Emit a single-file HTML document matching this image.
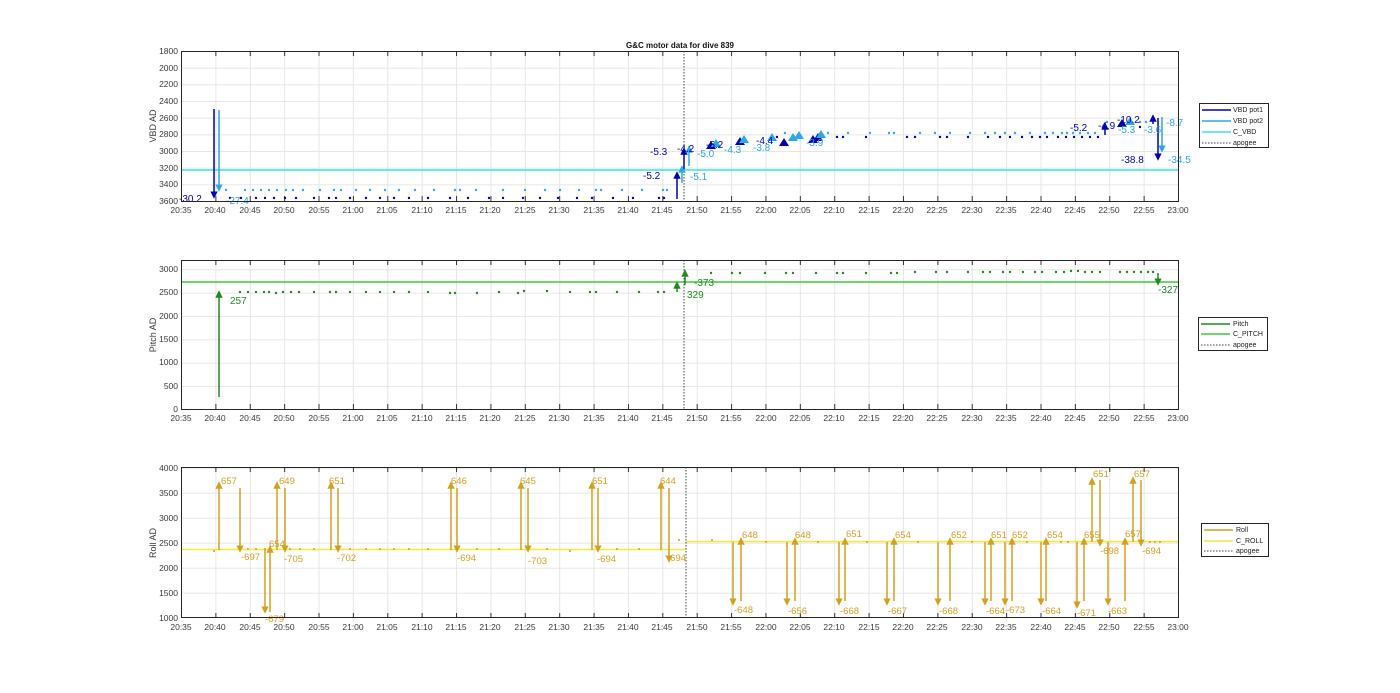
<!DOCTYPE html>
<html><head><meta charset="utf-8"><style>
html,body{margin:0;padding:0;background:#fff;}
svg{display:block;font-family:"Liberation Sans",Arial,sans-serif;}
.t{font-size:8.5px;fill:#3a3a3a;}
</style></head><body>
<svg width="1400" height="693" viewBox="0 0 1400 693" xmlns="http://www.w3.org/2000/svg">
<defs>
<pattern id="vg" x="181" y="0" width="34.38" height="700" patternUnits="userSpaceOnUse"><line x1="0.5" y1="0" x2="0.5" y2="700" stroke="#e6e6e6" stroke-width="1"/></pattern>
<pattern id="hg1" x="0" y="51" width="1400" height="16.67" patternUnits="userSpaceOnUse"><line x1="0" y1="0.5" x2="1400" y2="0.5" stroke="#e6e6e6"/></pattern>
<pattern id="hg2" x="0" y="269.3" width="1400" height="23.33" patternUnits="userSpaceOnUse"><line x1="0" y1="0.5" x2="1400" y2="0.5" stroke="#e6e6e6"/></pattern>
<pattern id="hg3" x="0" y="467.7" width="1400" height="25" patternUnits="userSpaceOnUse"><line x1="0" y1="0.5" x2="1400" y2="0.5" stroke="#e6e6e6"/></pattern>
<pattern id="tk" x="181" y="0" width="34.38" height="10" patternUnits="userSpaceOnUse"><line x1="0.5" y1="0" x2="0.5" y2="10" stroke="#333"/></pattern>
<marker id="mb" markerWidth="5" markerHeight="5" refX="2.5" refY="2.5" orient="auto" markerUnits="strokeWidth"><path d="M0,0L5,2.5L0,5Z" fill="#0000b0"/></marker>
<marker id="ml" markerWidth="5" markerHeight="5" refX="2.5" refY="2.5" orient="auto" markerUnits="strokeWidth"><path d="M0,0L5,2.5L0,5Z" fill="#2aa8e8"/></marker>
<marker id="mg" markerWidth="5" markerHeight="5" refX="2.5" refY="2.5" orient="auto" markerUnits="strokeWidth"><path d="M0,0L5,2.5L0,5Z" fill="#1f8a1f"/></marker>
<marker id="my" markerWidth="5" markerHeight="5" refX="2.5" refY="2.5" orient="auto" markerUnits="strokeWidth"><path d="M0,0L5,2.5L0,5Z" fill="#d4a020"/></marker>
</defs>

<!-- ============ TOP AXES ============ -->
<rect x="181" y="51" width="998" height="150" fill="url(#vg)"/>
<rect x="181" y="51" width="998" height="150" fill="url(#hg1)"/>
<rect x="181" y="51" width="998" height="5" fill="url(#tk)"/>
<rect x="181" y="196" width="998" height="5" fill="url(#tk)"/>
<text x="680" y="48" text-anchor="middle" style="font-size:8px;font-weight:bold;fill:#111">G&amp;C motor data for dive 839</text>
<g class="t" text-anchor="end">
<text x="178" y="54">1800</text><text x="178" y="71">2000</text><text x="178" y="87">2200</text><text x="178" y="104">2400</text><text x="178" y="121">2600</text><text x="178" y="137">2800</text><text x="178" y="154">3000</text><text x="178" y="171">3200</text><text x="178" y="187">3400</text><text x="178" y="204">3600</text>
</g>
<text transform="translate(156,126) rotate(-90)" text-anchor="middle" class="t" style="font-size:9px">VBD AD</text>
<line x1="181" y1="170" x2="1179" y2="170" stroke="#3ee0e0" stroke-width="1.5"/>
<line x1="684" y1="51" x2="684" y2="201" stroke="#444" stroke-dasharray="1.5,1.5"/>
<g fill="#2aa8e8">
<circle cx="226" cy="190" r="1.2"/><circle cx="245" cy="190" r="1.2"/><circle cx="253" cy="190" r="1.2"/><circle cx="261" cy="190" r="1.2"/><circle cx="269" cy="190" r="1.2"/><circle cx="277" cy="190" r="1.2"/><circle cx="286" cy="190" r="1.2"/><circle cx="293" cy="190" r="1.2"/><circle cx="303" cy="190" r="1.2"/><circle cx="320" cy="190" r="1.2"/><circle cx="334" cy="190" r="1.2"/><circle cx="341" cy="190" r="1.2"/><circle cx="356" cy="190" r="1.2"/><circle cx="370" cy="190" r="1.2"/><circle cx="385" cy="190" r="1.2"/><circle cx="399" cy="190" r="1.2"/><circle cx="415" cy="190" r="1.2"/><circle cx="434" cy="190" r="1.2"/><circle cx="455" cy="190" r="1.2"/><circle cx="460" cy="190" r="1.2"/><circle cx="476" cy="190" r="1.2"/><circle cx="503" cy="190" r="1.2"/><circle cx="525" cy="190" r="1.2"/><circle cx="545" cy="190" r="1.2"/><circle cx="560" cy="190" r="1.2"/><circle cx="579" cy="190" r="1.2"/><circle cx="596" cy="190" r="1.2"/><circle cx="601" cy="190" r="1.2"/><circle cx="622" cy="190" r="1.2"/><circle cx="642" cy="190" r="1.2"/><circle cx="663" cy="190" r="1.2"/><circle cx="667" cy="190" r="1.2"/>
</g>
<g fill="#0000b0">
<circle cx="230" cy="198" r="1.2"/><circle cx="241" cy="198" r="1.2"/><circle cx="256" cy="198" r="1.2"/><circle cx="265" cy="198" r="1.2"/><circle cx="274" cy="198" r="1.2"/><circle cx="285" cy="198" r="1.2"/><circle cx="296" cy="198" r="1.2"/><circle cx="314" cy="198" r="1.2"/><circle cx="329" cy="198" r="1.2"/><circle cx="336" cy="198" r="1.2"/><circle cx="350" cy="198" r="1.2"/><circle cx="366" cy="198" r="1.2"/><circle cx="380" cy="198" r="1.2"/><circle cx="394" cy="198" r="1.2"/><circle cx="409" cy="198" r="1.2"/><circle cx="428" cy="198" r="1.2"/><circle cx="450" cy="198" r="1.2"/><circle cx="468" cy="198" r="1.2"/><circle cx="489" cy="198" r="1.2"/><circle cx="503" cy="198" r="1.2"/><circle cx="523" cy="198" r="1.2"/><circle cx="540" cy="198" r="1.2"/><circle cx="558" cy="198" r="1.2"/><circle cx="577" cy="198" r="1.2"/><circle cx="592" cy="198" r="1.2"/><circle cx="613" cy="198" r="1.2"/><circle cx="633" cy="198" r="1.2"/><circle cx="659" cy="198" r="1.2"/><circle cx="664" cy="198" r="1.2"/>
</g>
<g fill="#2aa8e8">
<circle cx="785" cy="133" r="1.2"/><circle cx="821" cy="133" r="1.2"/><circle cx="828" cy="133" r="1.2"/><circle cx="848" cy="133" r="1.2"/><circle cx="870" cy="133" r="1.2"/><circle cx="889" cy="133" r="1.2"/><circle cx="894" cy="133" r="1.2"/><circle cx="920" cy="133" r="1.2"/><circle cx="935" cy="133" r="1.2"/><circle cx="950" cy="133" r="1.2"/><circle cx="970" cy="133" r="1.2"/><circle cx="985" cy="133" r="1.2"/><circle cx="995" cy="133" r="1.2"/><circle cx="1005" cy="133" r="1.2"/><circle cx="1015" cy="133" r="1.2"/><circle cx="1030" cy="133" r="1.2"/><circle cx="1045" cy="133" r="1.2"/><circle cx="1053" cy="133" r="1.2"/><circle cx="1062" cy="133" r="1.2"/><circle cx="1067" cy="133" r="1.2"/><circle cx="1073" cy="133" r="1.2"/><circle cx="1080" cy="133" r="1.2"/><circle cx="1088" cy="133" r="1.2"/><circle cx="1095" cy="133" r="1.2"/><circle cx="1107" cy="122" r="1.2"/><circle cx="1140" cy="122" r="1.2"/><circle cx="1146" cy="122" r="1.2"/>
</g>
<g fill="#0000b0">
<circle cx="777" cy="137" r="1.2"/><circle cx="837" cy="137" r="1.2"/><circle cx="843" cy="137" r="1.2"/><circle cx="866" cy="137" r="1.2"/><circle cx="907" cy="137" r="1.2"/><circle cx="915" cy="137" r="1.2"/><circle cx="940" cy="137" r="1.2"/><circle cx="947" cy="137" r="1.2"/><circle cx="968" cy="137" r="1.2"/><circle cx="988" cy="137" r="1.2"/><circle cx="1000" cy="137" r="1.2"/><circle cx="1010" cy="137" r="1.2"/><circle cx="1022" cy="137" r="1.2"/><circle cx="1032" cy="137" r="1.2"/><circle cx="1040" cy="137" r="1.2"/><circle cx="1047" cy="137" r="1.2"/><circle cx="1058" cy="137" r="1.2"/><circle cx="1066" cy="137" r="1.2"/><circle cx="1074" cy="137" r="1.2"/><circle cx="1082" cy="137" r="1.2"/><circle cx="1090" cy="137" r="1.2"/><circle cx="1098" cy="137" r="1.2"/><circle cx="1122" cy="125" r="1.2"/><circle cx="1140" cy="127" r="1.2"/>
</g>
<g stroke-width="1.5" fill="none">
<line x1="214" y1="109" x2="214" y2="195" stroke="#0000b0" marker-end="url(#mb)"/>
<line x1="219" y1="110" x2="219" y2="188" stroke="#2aa8e8" marker-end="url(#ml)"/>
<line x1="677" y1="199" x2="677" y2="175" stroke="#0000b0" marker-end="url(#mb)"/>
<line x1="684" y1="169" x2="684" y2="151" stroke="#0000b0" marker-end="url(#mb)"/>
<line x1="682" y1="183" x2="682" y2="169" stroke="#2aa8e8" marker-end="url(#ml)"/>
<line x1="689" y1="166" x2="689" y2="149" stroke="#2aa8e8" marker-end="url(#ml)"/>
<line x1="1105" y1="135" x2="1105" y2="126" stroke="#0000b0" marker-end="url(#mb)"/>
<line x1="1153" y1="124" x2="1153" y2="118" stroke="#0000b0" marker-end="url(#mb)"/>
<line x1="1158" y1="118" x2="1158" y2="157" stroke="#0000b0" marker-end="url(#mb)"/>
<line x1="1162" y1="117" x2="1162" y2="149" stroke="#2aa8e8" marker-end="url(#ml)"/>
</g>
<g fill="#0000b0">
<path d="M706,149l5,-8l5,8z"/><path d="M735,145l5,-8l5,8z"/><path d="M779,146l5,-8l5,8z"/><path d="M808,143l5,-8l5,8z"/><path d="M813,141l5,-8l5,8z"/><path d="M1117,127l5,-8l5,8z"/>
</g>
<g fill="#2aa8e8">
<path d="M711,147l5,-8l5,8z"/><path d="M739,143l5,-8l5,8z"/><path d="M767,141l5,-8l5,8z"/><path d="M788,141l5,-8l5,8z"/><path d="M794,139l5,-8l5,8z"/><path d="M816,138l5,-8l5,8z"/><path d="M1125,125l5,-8l5,8z"/>
</g>
<g style="font-size:10px" fill="#0000b0">
<text x="179" y="202">-30.2</text><text x="650" y="155">-5.3</text><text x="643" y="179">-5.2</text><text x="677" y="152">-4.2</text><text x="706" y="148">-5.2</text><text x="756" y="144">-4.4</text><text x="1070" y="131">-5.2</text><text x="1098" y="129">-4.9</text><text x="1117" y="123">-10.2</text><text x="1121" y="163">-38.8</text>
</g>
<g style="font-size:10px" fill="#2aa8e8">
<text x="226" y="204">-27.4</text><text x="690" y="180">-5.1</text><text x="697" y="157">-5.0</text><text x="724" y="153">-4.3</text><text x="753" y="151">-3.8</text><text x="806" y="146">-3.9</text><text x="1118" y="133">-5.3</text><text x="1144" y="133">-3.6</text><text x="1166" y="126">-8.7</text><text x="1168" y="163">-34.5</text>
</g>
<rect x="181.5" y="51.5" width="997" height="150" fill="none" stroke="#262626" stroke-width="1"/>
<g class="t" text-anchor="middle">
<text x="181" y="213">20:35</text><text x="215" y="213">20:40</text><text x="250" y="213">20:45</text><text x="284" y="213">20:50</text><text x="319" y="213">20:55</text><text x="353" y="213">21:00</text><text x="387" y="213">21:05</text><text x="422" y="213">21:10</text><text x="456" y="213">21:15</text><text x="490" y="213">21:20</text><text x="525" y="213">21:25</text><text x="559" y="213">21:30</text><text x="594" y="213">21:35</text><text x="628" y="213">21:40</text><text x="662" y="213">21:45</text><text x="697" y="213">21:50</text><text x="731" y="213">21:55</text><text x="766" y="213">22:00</text><text x="800" y="213">22:05</text><text x="834" y="213">22:10</text><text x="869" y="213">22:15</text><text x="903" y="213">22:20</text><text x="937" y="213">22:25</text><text x="972" y="213">22:30</text><text x="1006" y="213">22:35</text><text x="1041" y="213">22:40</text><text x="1075" y="213">22:45</text><text x="1109" y="213">22:50</text><text x="1144" y="213">22:55</text><text x="1178" y="213">23:00</text>
</g>
<rect x="1199.5" y="103.5" width="69" height="44" fill="#fff" stroke="#262626"/>
<line x1="1202" y1="110" x2="1231" y2="110" stroke="#0000b0" stroke-width="1.5"/>
<line x1="1202" y1="121" x2="1231" y2="121" stroke="#2aa8e8" stroke-width="1.5"/>
<line x1="1202" y1="132" x2="1231" y2="132" stroke="#3ee0e0" stroke-width="1.5"/>
<line x1="1202" y1="143" x2="1231" y2="143" stroke="#444" stroke-dasharray="1.5,1.5"/>
<g style="font-size:7px" fill="#222"><text x="1233" y="112">VBD pot1</text><text x="1233" y="123">VBD pot2</text><text x="1233" y="134">C_VBD</text><text x="1233" y="145">apogee</text></g>

<!-- ============ MIDDLE AXES ============ -->
<rect x="181" y="260" width="998" height="149" fill="url(#vg)"/>
<rect x="181" y="260" width="998" height="149" fill="url(#hg2)"/>
<rect x="181" y="260" width="998" height="5" fill="url(#tk)"/>
<rect x="181" y="404" width="998" height="5" fill="url(#tk)"/>
<g class="t" text-anchor="end">
<text x="178" y="272">3000</text><text x="178" y="295">2500</text><text x="178" y="319">2000</text><text x="178" y="342">1500</text><text x="178" y="365">1000</text><text x="178" y="389">500</text><text x="178" y="412">0</text>
</g>
<text transform="translate(156,335) rotate(-90)" text-anchor="middle" class="t" style="font-size:9px">Pitch AD</text>
<line x1="181" y1="282" x2="1179" y2="282" stroke="#3ccc3c" stroke-width="1.5"/>
<line x1="684" y1="260" x2="684" y2="409" stroke="#444" stroke-dasharray="1.5,1.5"/>
<g fill="#1f8a1f">
<circle cx="240" cy="292" r="1.2"/><circle cx="248" cy="292" r="1.2"/><circle cx="256" cy="292" r="1.2"/><circle cx="264" cy="292" r="1.2"/><circle cx="269" cy="292" r="1.2"/><circle cx="276" cy="293" r="1.2"/><circle cx="283" cy="292" r="1.2"/><circle cx="291" cy="292" r="1.2"/><circle cx="299" cy="292" r="1.2"/><circle cx="314" cy="292" r="1.2"/><circle cx="330" cy="292" r="1.2"/><circle cx="336" cy="292" r="1.2"/><circle cx="350" cy="292" r="1.2"/><circle cx="366" cy="292" r="1.2"/><circle cx="380" cy="292" r="1.2"/><circle cx="394" cy="292" r="1.2"/><circle cx="409" cy="292" r="1.2"/><circle cx="428" cy="292" r="1.2"/><circle cx="450" cy="293" r="1.2"/><circle cx="455" cy="293" r="1.2"/><circle cx="477" cy="293" r="1.2"/><circle cx="499" cy="292" r="1.2"/><circle cx="518" cy="293" r="1.2"/><circle cx="524" cy="291" r="1.2"/><circle cx="547" cy="291" r="1.2"/><circle cx="570" cy="292" r="1.2"/><circle cx="590" cy="292" r="1.2"/><circle cx="596" cy="292" r="1.2"/><circle cx="617" cy="292" r="1.2"/><circle cx="639" cy="292" r="1.2"/><circle cx="658" cy="292" r="1.2"/><circle cx="664" cy="292" r="1.2"/>
<circle cx="711" cy="273" r="1.2"/><circle cx="732" cy="273" r="1.2"/><circle cx="740" cy="273" r="1.2"/><circle cx="765" cy="273" r="1.2"/><circle cx="786" cy="273" r="1.2"/><circle cx="793" cy="273" r="1.2"/><circle cx="816" cy="273" r="1.2"/><circle cx="837" cy="273" r="1.2"/><circle cx="843" cy="273" r="1.2"/><circle cx="866" cy="273" r="1.2"/><circle cx="891" cy="273" r="1.2"/><circle cx="897" cy="273" r="1.2"/><circle cx="915" cy="272" r="1.2"/><circle cx="936" cy="272" r="1.2"/><circle cx="947" cy="272" r="1.2"/><circle cx="968" cy="272" r="1.2"/><circle cx="983" cy="272" r="1.2"/><circle cx="990" cy="272" r="1.2"/><circle cx="1003" cy="272" r="1.2"/><circle cx="1010" cy="272" r="1.2"/><circle cx="1023" cy="272" r="1.2"/><circle cx="1035" cy="272" r="1.2"/><circle cx="1042" cy="272" r="1.2"/><circle cx="1056" cy="272" r="1.2"/><circle cx="1064" cy="272" r="1.2"/><circle cx="1071" cy="271" r="1.2"/><circle cx="1078" cy="271" r="1.2"/><circle cx="1085" cy="272" r="1.2"/><circle cx="1092" cy="272" r="1.2"/><circle cx="1100" cy="272" r="1.2"/><circle cx="1120" cy="272" r="1.2"/><circle cx="1127" cy="272" r="1.2"/><circle cx="1134" cy="272" r="1.2"/><circle cx="1141" cy="272" r="1.2"/><circle cx="1148" cy="272" r="1.2"/><circle cx="1153" cy="272" r="1.2"/>
</g>
<g stroke="#1f8a1f" stroke-width="1.5">
<line x1="219" y1="397" x2="219" y2="294" marker-end="url(#mg)"/>
<line x1="677" y1="292" x2="677" y2="285" marker-end="url(#mg)"/>
<line x1="685" y1="285" x2="685" y2="273" marker-end="url(#mg)"/>
<line x1="1158" y1="273" x2="1158" y2="282" marker-end="url(#mg)"/>
</g>
<g style="font-size:10px" fill="#1f8a1f"><text x="230" y="304">257</text><text x="694" y="286">-373</text><text x="687" y="298">329</text><text x="1158" y="293">-327</text></g>
<rect x="181.5" y="260.5" width="997" height="149" fill="none" stroke="#262626"/>
<g class="t" text-anchor="middle">
<text x="181" y="421">20:35</text><text x="215" y="421">20:40</text><text x="250" y="421">20:45</text><text x="284" y="421">20:50</text><text x="319" y="421">20:55</text><text x="353" y="421">21:00</text><text x="387" y="421">21:05</text><text x="422" y="421">21:10</text><text x="456" y="421">21:15</text><text x="490" y="421">21:20</text><text x="525" y="421">21:25</text><text x="559" y="421">21:30</text><text x="594" y="421">21:35</text><text x="628" y="421">21:40</text><text x="662" y="421">21:45</text><text x="697" y="421">21:50</text><text x="731" y="421">21:55</text><text x="766" y="421">22:00</text><text x="800" y="421">22:05</text><text x="834" y="421">22:10</text><text x="869" y="421">22:15</text><text x="903" y="421">22:20</text><text x="937" y="421">22:25</text><text x="972" y="421">22:30</text><text x="1006" y="421">22:35</text><text x="1041" y="421">22:40</text><text x="1075" y="421">22:45</text><text x="1109" y="421">22:50</text><text x="1144" y="421">22:55</text><text x="1178" y="421">23:00</text>
</g>
<rect x="1198.5" y="317.5" width="69" height="33" fill="#fff" stroke="#262626"/>
<line x1="1201" y1="324" x2="1230" y2="324" stroke="#1f8a1f" stroke-width="1.5"/>
<line x1="1201" y1="334" x2="1230" y2="334" stroke="#3ccc3c" stroke-width="1.5"/>
<line x1="1201" y1="345" x2="1230" y2="345" stroke="#444" stroke-dasharray="1.5,1.5"/>
<g style="font-size:7px" fill="#222"><text x="1233" y="326">Pitch</text><text x="1233" y="336">C_PITCH</text><text x="1233" y="347">apogee</text></g>

<!-- ============ BOTTOM AXES ============ -->
<rect x="181" y="467" width="998" height="151" fill="url(#vg)"/>
<rect x="181" y="467" width="998" height="151" fill="url(#hg3)"/>
<rect x="181" y="467" width="998" height="5" fill="url(#tk)"/>
<rect x="181" y="613" width="998" height="5" fill="url(#tk)"/>
<g class="t" text-anchor="end">
<text x="178" y="471">4000</text><text x="178" y="496">3500</text><text x="178" y="521">3000</text><text x="178" y="546">2500</text><text x="178" y="571">2000</text><text x="178" y="596">1500</text><text x="178" y="621">1000</text>
</g>
<text transform="translate(156,543) rotate(-90)" text-anchor="middle" class="t" style="font-size:9px">Roll AD</text>
<line x1="181" y1="549.5" x2="686" y2="549.5" stroke="#f2ea3a" stroke-width="1.5"/>
<line x1="686" y1="541.5" x2="1179" y2="541.5" stroke="#f2ea3a" stroke-width="1.5"/>
<line x1="686" y1="467" x2="686" y2="618" stroke="#444" stroke-dasharray="1.5,1.5"/>
<g fill="#d4a020">
<circle cx="214" cy="551" r="1"/><circle cx="248" cy="549" r="1"/><circle cx="256" cy="549" r="1"/><circle cx="290" cy="549" r="1"/><circle cx="300" cy="549" r="1"/><circle cx="314" cy="549" r="1"/><circle cx="350" cy="549" r="1"/><circle cx="366" cy="549" r="1"/><circle cx="380" cy="549" r="1"/><circle cx="394" cy="549" r="1"/><circle cx="409" cy="549" r="1"/><circle cx="428" cy="549" r="1"/><circle cx="477" cy="549" r="1"/><circle cx="499" cy="549" r="1"/><circle cx="547" cy="549" r="1"/><circle cx="570" cy="551" r="1"/><circle cx="617" cy="549" r="1"/><circle cx="639" cy="549" r="1"/><circle cx="679" cy="540" r="1"/><circle cx="712" cy="540" r="1"/><circle cx="766" cy="542" r="1"/><circle cx="818" cy="542" r="1"/><circle cx="867" cy="542" r="1"/><circle cx="918" cy="542" r="1"/><circle cx="972" cy="542" r="1"/><circle cx="1027" cy="542" r="1"/><circle cx="1061" cy="542" r="1"/><circle cx="1068" cy="542" r="1"/><circle cx="1150" cy="542" r="1"/><circle cx="1155" cy="542" r="1"/><circle cx="1160" cy="542" r="1"/>
</g>
<g stroke="#d4a020" stroke-width="1.5">
<line x1="219" y1="550" x2="219" y2="485" marker-end="url(#my)"/>
<line x1="277" y1="550" x2="277" y2="485" marker-end="url(#my)"/>
<line x1="331" y1="550" x2="331" y2="485" marker-end="url(#my)"/>
<line x1="451" y1="550" x2="451" y2="485" marker-end="url(#my)"/>
<line x1="521" y1="550" x2="521" y2="485" marker-end="url(#my)"/>
<line x1="592" y1="550" x2="592" y2="485" marker-end="url(#my)"/>
<line x1="661" y1="550" x2="661" y2="485" marker-end="url(#my)"/>
<line x1="270" y1="612" x2="270" y2="549" marker-end="url(#my)"/>
<line x1="240" y1="488" x2="240" y2="549" marker-end="url(#my)"/>
<line x1="285" y1="488" x2="285" y2="549" marker-end="url(#my)"/>
<line x1="338" y1="488" x2="338" y2="549" marker-end="url(#my)"/>
<line x1="457" y1="488" x2="457" y2="549" marker-end="url(#my)"/>
<line x1="528" y1="488" x2="528" y2="549" marker-end="url(#my)"/>
<line x1="598" y1="488" x2="598" y2="549" marker-end="url(#my)"/>
<line x1="669" y1="488" x2="669" y2="559" marker-end="url(#my)"/>
<line x1="265" y1="548" x2="265" y2="610" marker-end="url(#my)"/>
<line x1="733" y1="542" x2="733" y2="602" marker-end="url(#my)"/>
<line x1="787" y1="542" x2="787" y2="602" marker-end="url(#my)"/>
<line x1="839" y1="542" x2="839" y2="602" marker-end="url(#my)"/>
<line x1="887" y1="542" x2="887" y2="602" marker-end="url(#my)"/>
<line x1="938" y1="542" x2="938" y2="602" marker-end="url(#my)"/>
<line x1="985" y1="542" x2="985" y2="602" marker-end="url(#my)"/>
<line x1="1005" y1="542" x2="1005" y2="602" marker-end="url(#my)"/>
<line x1="1041" y1="542" x2="1041" y2="602" marker-end="url(#my)"/>
<line x1="1077" y1="542" x2="1077" y2="605" marker-end="url(#my)"/>
<line x1="1108" y1="542" x2="1108" y2="602" marker-end="url(#my)"/>
<line x1="741" y1="601" x2="741" y2="541" marker-end="url(#my)"/>
<line x1="795" y1="601" x2="795" y2="541" marker-end="url(#my)"/>
<line x1="845" y1="601" x2="845" y2="541" marker-end="url(#my)"/>
<line x1="894" y1="601" x2="894" y2="541" marker-end="url(#my)"/>
<line x1="950" y1="601" x2="950" y2="541" marker-end="url(#my)"/>
<line x1="991" y1="601" x2="991" y2="541" marker-end="url(#my)"/>
<line x1="1012" y1="601" x2="1012" y2="541" marker-end="url(#my)"/>
<line x1="1046" y1="601" x2="1046" y2="541" marker-end="url(#my)"/>
<line x1="1084" y1="601" x2="1084" y2="541" marker-end="url(#my)"/>
<line x1="1125" y1="601" x2="1125" y2="541" marker-end="url(#my)"/>
<line x1="1092" y1="542" x2="1092" y2="481" marker-end="url(#my)"/>
<line x1="1100" y1="480" x2="1100" y2="543" marker-end="url(#my)"/>
<line x1="1133" y1="542" x2="1133" y2="480" marker-end="url(#my)"/>
<line x1="1141" y1="480" x2="1141" y2="543" marker-end="url(#my)"/>
</g>
<g style="font-size:9.5px" fill="#d4a020">
<text x="221" y="484">657</text><text x="279" y="484">649</text><text x="329" y="484">651</text><text x="451" y="484">646</text><text x="520" y="484">645</text><text x="592" y="484">651</text><text x="660" y="484">644</text><text x="269" y="547">654</text>
<text x="241" y="560">-697</text><text x="284" y="562">-705</text><text x="337" y="561">-702</text><text x="457" y="561">-694</text><text x="528" y="564">-703</text><text x="597" y="562">-694</text><text x="667" y="561">-694</text><text x="265" y="622">-679</text>
<text x="742" y="538">648</text><text x="795" y="538">648</text><text x="846" y="537">651</text><text x="895" y="538">654</text><text x="951" y="538">652</text><text x="991" y="538">651</text><text x="1012" y="538">652</text><text x="1047" y="538">654</text><text x="1084" y="538">655</text><text x="1125" y="537">657</text><text x="1093" y="477">651</text><text x="1134" y="477">657</text>
<text x="734" y="613">-648</text><text x="788" y="614">-656</text><text x="840" y="614">-668</text><text x="888" y="614">-667</text><text x="939" y="614">-668</text><text x="986" y="614">-664</text><text x="1006" y="613">-673</text><text x="1042" y="614">-664</text><text x="1077" y="616">-671</text><text x="1108" y="614">-663</text><text x="1100" y="554">-698</text><text x="1142" y="554">-694</text>
</g>
<rect x="181.5" y="467.5" width="997" height="150" fill="none" stroke="#262626"/>
<g class="t" text-anchor="middle">
<text x="181" y="630">20:35</text><text x="215" y="630">20:40</text><text x="250" y="630">20:45</text><text x="284" y="630">20:50</text><text x="319" y="630">20:55</text><text x="353" y="630">21:00</text><text x="387" y="630">21:05</text><text x="422" y="630">21:10</text><text x="456" y="630">21:15</text><text x="490" y="630">21:20</text><text x="525" y="630">21:25</text><text x="559" y="630">21:30</text><text x="594" y="630">21:35</text><text x="628" y="630">21:40</text><text x="662" y="630">21:45</text><text x="697" y="630">21:50</text><text x="731" y="630">21:55</text><text x="766" y="630">22:00</text><text x="800" y="630">22:05</text><text x="834" y="630">22:10</text><text x="869" y="630">22:15</text><text x="903" y="630">22:20</text><text x="937" y="630">22:25</text><text x="972" y="630">22:30</text><text x="1006" y="630">22:35</text><text x="1041" y="630">22:40</text><text x="1075" y="630">22:45</text><text x="1109" y="630">22:50</text><text x="1144" y="630">22:55</text><text x="1178" y="630">23:00</text>
</g>
<rect x="1201.5" y="523.5" width="67" height="33" fill="#fff" stroke="#262626"/>
<line x1="1204" y1="530" x2="1233" y2="530" stroke="#d4a020" stroke-width="1.5"/>
<line x1="1204" y1="541" x2="1233" y2="541" stroke="#f2ea3a" stroke-width="1.5"/>
<line x1="1204" y1="551" x2="1233" y2="551" stroke="#444" stroke-dasharray="1.5,1.5"/>
<g style="font-size:7px" fill="#222"><text x="1236" y="532">Roll</text><text x="1236" y="543">C_ROLL</text><text x="1236" y="553">apogee</text></g>
</svg>
</body></html>
